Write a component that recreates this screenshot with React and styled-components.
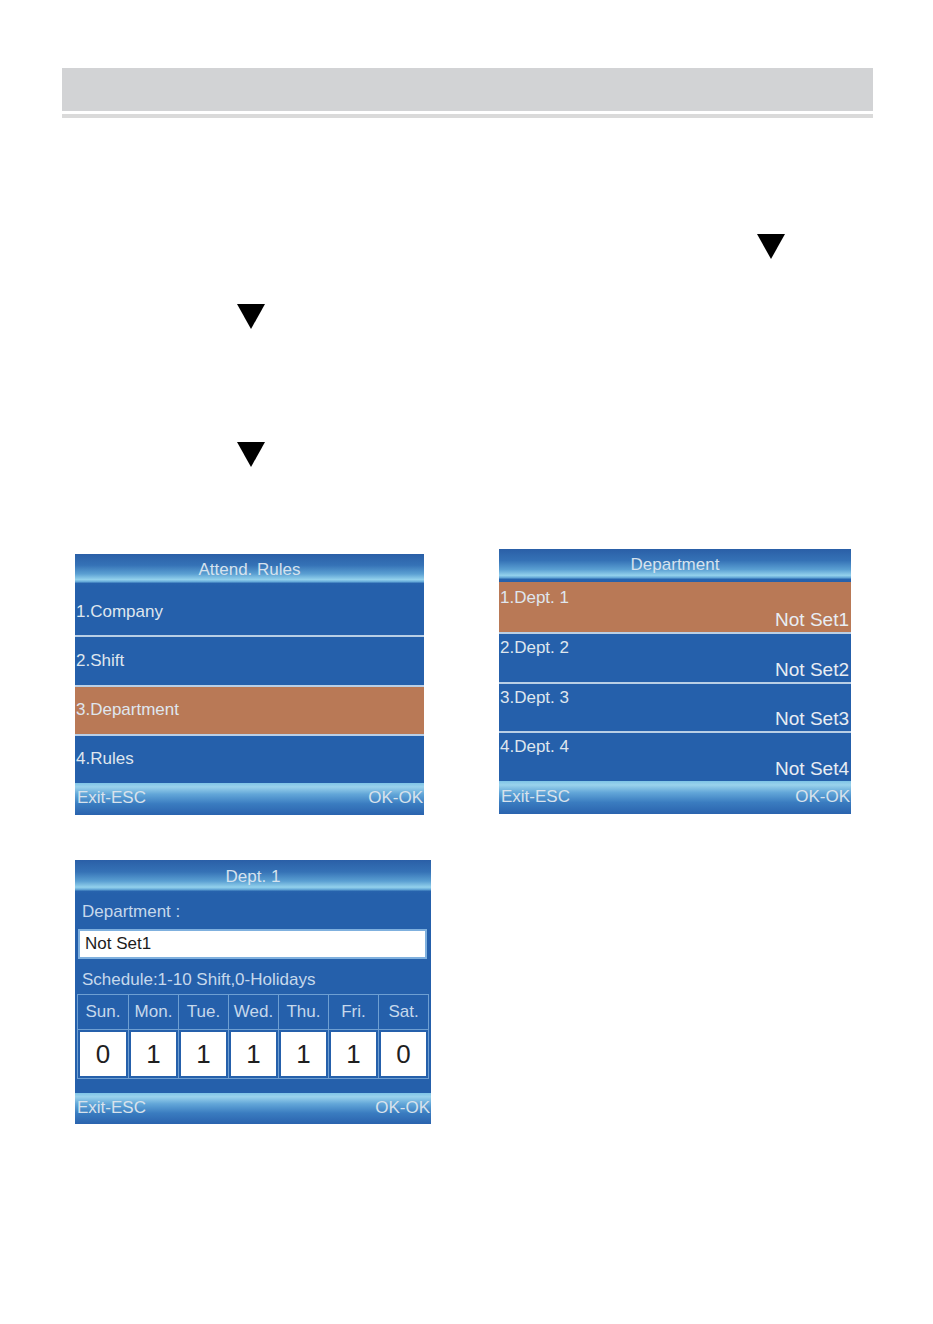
import styled, { createGlobalStyle } from "styled-components";

const GlobalStyle = createGlobalStyle`
  html, body {
    margin: 0;
    padding: 0;
    background: #ffffff;
  }
  body {
    font-family: "Liberation Sans", Arial, sans-serif;
  }
`;

const Page = styled.div`
  width: 933px;
  height: 1324px;
  background: #fff;
  padding-top: 68px;
  box-sizing: border-box;
`;

const HeaderBar = styled.div`
  margin-left: 62px;
  width: 811px;
  height: 43px;
  background: #d2d3d5;
`;

const HeaderRule = styled.div`
  margin: 3px 0 0 62px;
  width: 811px;
  height: 4px;
  background: #dadada;
`;

const ArrowRow = styled.div`
  height: ${(p) => p.$h}px;
  padding-top: ${(p) => p.$top}px;
  padding-left: ${(p) => p.$left}px;
  box-sizing: border-box;
`;

const Arrow = () => (
  <svg width="28" height="25" viewBox="0 0 28 25">
    <polygon points="0,0 28,0 14,25" fill="#000" />
  </svg>
);

const ScreenRow = styled.div`
  display: flex;
  align-items: flex-start;
  padding-left: 75px;
`;

const Screen = styled.div`
  width: ${(p) => p.$w}px;
  height: ${(p) => p.$h}px;
  margin-top: ${(p) => p.$mt || 0}px;
  margin-left: ${(p) => p.$ml || 0}px;
  background: #2560ab;
  display: flex;
  flex-direction: column;
  color: #dde5ef;
  font-size: 17px;
  overflow: hidden;
`;

const TitleBar = styled.div`
  height: ${(p) => p.$h}px;
  flex: none;
  display: flex;
  align-items: center;
  justify-content: center;
  padding-bottom: 1px;
  box-sizing: border-box;
  background: linear-gradient(
    to bottom,
    #2a5fa7 0%,
    #3572b6 35%,
    #5a9fd2 62%,
    #93d1ec 80%,
    #6aaedb 86%,
    #2763ad 92%,
    #2560ab 100%
  );
  color: #d6e2ee;
`;

const Footer = styled.div`
  height: ${(p) => p.$h}px;
  flex: none;
  display: flex;
  align-items: center;
  justify-content: space-between;
  padding: 0 1px 2px 2px;
  box-sizing: border-box;
  background: linear-gradient(
    to bottom,
    #7fc4e6 0%,
    #9ad2ec 12%,
    #62a6d8 35%,
    #3a7cc0 65%,
    #2a63ae 100%
  );
  color: #d8e2ec;
`;

const MenuItem = styled.div`
  flex: 1 1 0;
  min-height: 0;
  display: flex;
  align-items: center;
  padding-left: 1px;
  background: ${(p) => (p.$active ? "#b97956" : "#2560ab")};
  border-top: 2px solid ${(p) => (p.$first ? "transparent" : "#b9cfe6")};
  color: #dfe6ee;
`;

const DeptItem = styled.div`
  flex: 1 1 0;
  min-height: 0;
  display: flex;
  flex-direction: column;
  justify-content: space-between;
  padding: 5px 2px 1px 1px;
  line-height: 1.1;
  background: ${(p) => (p.$active ? "#b97956" : "#2560ab")};
  border-top: 2px solid ${(p) => (p.$first ? "transparent" : "#b9cfe6")};
  color: #dfe6ee;
`;

const DeptValue = styled.span`
  align-self: flex-end;
  font-size: 19px;
  color: #e8edf3;
`;

const FieldLabel = styled.div`
  height: ${(p) => p.$h}px;
  display: flex;
  align-items: center;
  padding: ${(p) => p.$pt || 0}px 0 0 7px;
  box-sizing: border-box;
  color: #c6d8ec;
  font-size: 17px;
`;

const InputBox = styled.div`
  margin: 0 4px 0 3px;
  height: 30px;
  border: 2px solid #7fb0de;
  background: #fff;
  color: #1c1c1c;
  display: flex;
  align-items: center;
  padding-left: 5px;
  font-size: 17px;
  box-sizing: border-box;
`;

const WeekGrid = styled.div`
  margin: 0 2px;
  display: grid;
  grid-template-columns: repeat(7, 1fr);
  border: 1px solid #6e9fd2;
`;

const DayHead = styled.div`
  height: 34px;
  display: flex;
  align-items: center;
  justify-content: center;
  border-left: ${(p) => (p.$first ? "none" : "1px solid #6e9fd2")};
  border-bottom: 1px solid #6e9fd2;
  color: #c6d8ec;
  font-size: 17px;
`;

const DayValue = styled.div`
  height: 48px;
  display: flex;
  align-items: center;
  justify-content: center;
  border-left: ${(p) => (p.$first ? "none" : "1px solid #6e9fd2")};
  padding: 2px 2px;
  box-sizing: border-box;
`;

const ValueBox = styled.div`
  width: 100%;
  height: 100%;
  background: #fff;
  color: #1f1f1f;
  font-size: 26px;
  display: flex;
  align-items: center;
  justify-content: center;
`;

const Spacer = styled.div`
  flex: 1;
`;

const menu = ["1.Company", "2.Shift", "3.Department", "4.Rules"];
const depts = [1, 2, 3, 4];
const week = [
  ["Sun.", 0],
  ["Mon.", 1],
  ["Tue.", 1],
  ["Wed.", 1],
  ["Thu.", 1],
  ["Fri.", 1],
  ["Sat.", 0],
];

export default function App() {
  return (
    <>
      <GlobalStyle />
      <Page>
        <HeaderBar />
        <HeaderRule />

        <ArrowRow $h={186} $top={116} $left={757}>
          <Arrow />
        </ArrowRow>
        <ArrowRow $h={138} $top={0} $left={237}>
          <Arrow />
        </ArrowRow>
        <ArrowRow $h={107} $top={0} $left={237}>
          <Arrow />
        </ArrowRow>

        <ScreenRow>
          <Screen $w={349} $h={261} $mt={5}>
            <TitleBar $h={32}>Attend. Rules</TitleBar>
            {menu.map((m, i) => (
              <MenuItem key={m} $first={i === 0} $active={i === 2}>
                {m}
              </MenuItem>
            ))}
            <Footer $h={32}>
              <span>Exit-ESC</span>
              <span>OK-OK</span>
            </Footer>
          </Screen>

          <Screen $w={352} $h={265} $ml={75}>
            <TitleBar $h={33}>Department</TitleBar>
            {depts.map((d, i) => (
              <DeptItem key={d} $first={i === 0} $active={i === 0}>
                <span>{`${d}.Dept. ${d}`}</span>
                <DeptValue>{`Not Set${d}`}</DeptValue>
              </DeptItem>
            ))}
            <Footer $h={33}>
              <span>Exit-ESC</span>
              <span>OK-OK</span>
            </Footer>
          </Screen>
        </ScreenRow>

        <ScreenRow>
          <Screen $w={356} $h={264} $mt={45}>
            <TitleBar $h={34}>Dept. 1</TitleBar>
            <FieldLabel $h={35}>Department :</FieldLabel>
            <InputBox>Not Set1</InputBox>
            <FieldLabel $h={35} $pt={6}>
              Schedule:1-10 Shift,0-Holidays
            </FieldLabel>
            <WeekGrid>
              {week.map(([d], i) => (
                <DayHead key={d} $first={i === 0}>
                  {d}
                </DayHead>
              ))}
              {week.map(([d, v], i) => (
                <DayValue key={d} $first={i === 0}>
                  <ValueBox>{v}</ValueBox>
                </DayValue>
              ))}
            </WeekGrid>
            <Spacer />
            <Footer $h={31}>
              <span>Exit-ESC</span>
              <span>OK-OK</span>
            </Footer>
          </Screen>
        </ScreenRow>
      </Page>
    </>
  );
}
